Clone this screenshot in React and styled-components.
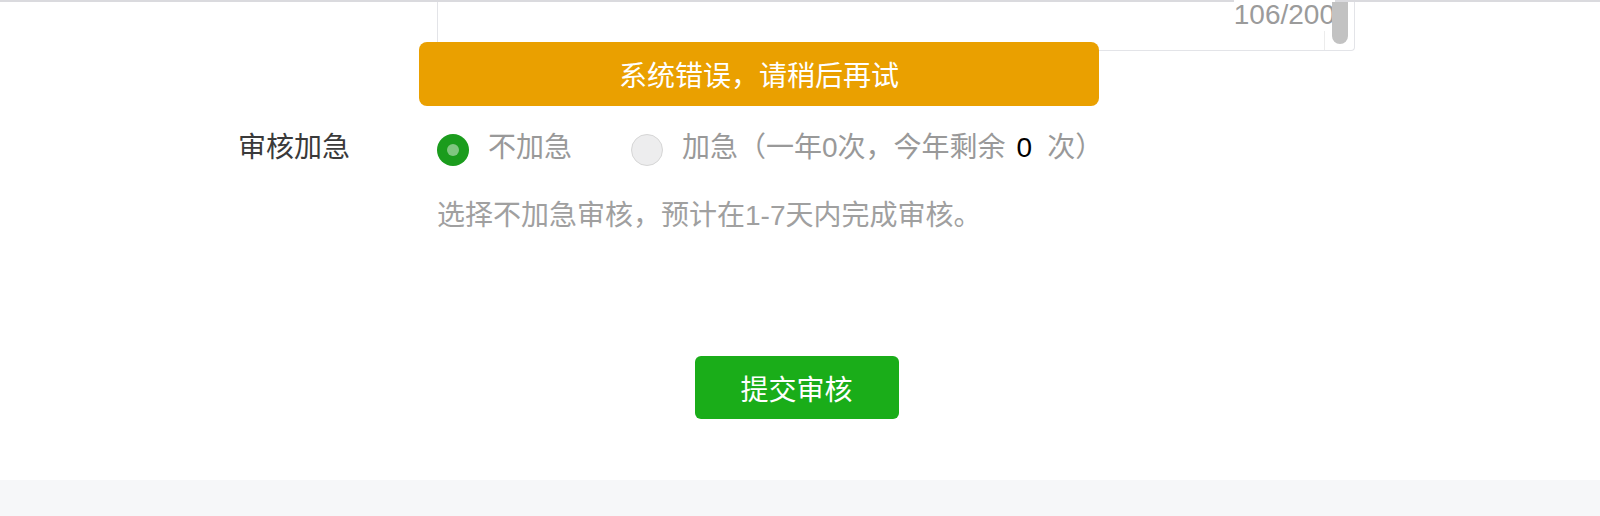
import React from 'react';
import styled, { createGlobalStyle } from 'styled-components';

const GlobalStyle = createGlobalStyle`
  html, body {
    margin: 0;
    padding: 0;
    background: #f6f7f9;
    font-family: 'Liberation Sans', 'Noto Sans CJK SC', sans-serif;
  }
`;

const Panel = styled.div`
  position: relative;
  background: #fff;
  border-top: 2px solid #dadade;
  padding-bottom: 61px;
  box-shadow: 0 1px 3px rgba(0, 0, 0, 0.12);
`;

const Form = styled.div`
  margin-left: 238px;
  width: 1117px;
`;

const TextareaBox = styled.div`
  position: relative;
  margin-left: 199px;
  height: 48px;
  border: 1px solid #e3e4e8;
  border-top: none;
  border-radius: 0 0 4px 4px;
`;

const Counter = styled.span`
  position: absolute;
  top: -3px;
  right: 19px;
  font-size: 28px;
  line-height: 32px;
  color: #9b9b9b;
  background: #fff;
`;

const Track = styled.div`
  position: absolute;
  top: 29px;
  right: 0;
  bottom: 0;
  width: 29px;
  border-left: 1px solid #ececec;
`;

const Thumb = styled.div`
  position: absolute;
  top: 0;
  right: 6px;
  width: 16px;
  height: 42px;
  border-radius: 0 0 8px 8px;
  background: #c2c2c2;
`;

const Toast = styled.div`
  position: absolute;
  left: 419px;
  top: 40px;
  width: 680px;
  height: 64px;
  border-radius: 8px;
  background: #eaa000;
  color: #fff;
  font-size: 28px;
  display: flex;
  align-items: center;
  justify-content: center;
`;

const Row = styled.div`
  display: flex;
  margin-top: ${(p) => p.$top || 0}px;
`;

const Label = styled.div`
  width: 199px;
  flex-shrink: 0;
  font-size: 28px;
  line-height: 36px;
  color: #3a3a3a;
`;

const Options = styled.div`
  display: flex;
  align-items: center;
  height: 36px;
`;

const Option = styled.label`
  display: flex;
  align-items: center;
  margin-right: 59px;
  font-size: 28px;
  line-height: 32px;
  color: #999;
`;

const Radio = styled.span`
  box-sizing: border-box;
  width: 32px;
  height: 32px;
  margin-top: 4px;
  margin-right: 19px;
  border-radius: 50%;
  display: flex;
  align-items: center;
  justify-content: center;
  background: ${(p) => (p.$checked ? '#1b9c1d' : '#ededee')};
  border: ${(p) => (p.$checked ? 'none' : '1.5px solid #d6d6d6')};

  &::after {
    content: '';
    display: ${(p) => (p.$checked ? 'block' : 'none')};
    width: 12px;
    height: 12px;
    border-radius: 50%;
    background: #80c680;
  }
`;

const Count = styled.span`
  margin: 0 15px 0 11px;
  color: #000;
`;

const Hint = styled.div`
  margin-left: 199px;
  margin-top: 34px;
  font-size: 28px;
  line-height: 32px;
  color: #a0a0a0;
`;

const Actions = styled.div`
  display: flex;
  justify-content: center;
  margin-top: 124px;
`;

const SubmitButton = styled.button`
  width: 204px;
  height: 63px;
  border: none;
  border-radius: 6px;
  background: #1aad19;
  color: #fff;
  font-family: inherit;
  font-size: 28px;
  cursor: pointer;
`;

export default function App() {
  return (
    <>
      <GlobalStyle />
      <Panel>
        <Form>
          <TextareaBox>
            <Counter>106/200</Counter>
            <Track />
            <Thumb />
          </TextareaBox>

          <Row $top={79}>
            <Label>审核加急</Label>
            <Options>
              <Option>
                <Radio $checked />
                不加急
              </Option>
              <Option>
                <Radio />
                加急（一年0次，今年剩余<Count>0</Count>次）
              </Option>
            </Options>
          </Row>
          <Hint>选择不加急审核，预计在1-7天内完成审核。</Hint>

          <Actions>
            <SubmitButton>提交审核</SubmitButton>
          </Actions>
        </Form>
        <Toast>系统错误，请稍后再试</Toast>
      </Panel>
    </>
  );
}
